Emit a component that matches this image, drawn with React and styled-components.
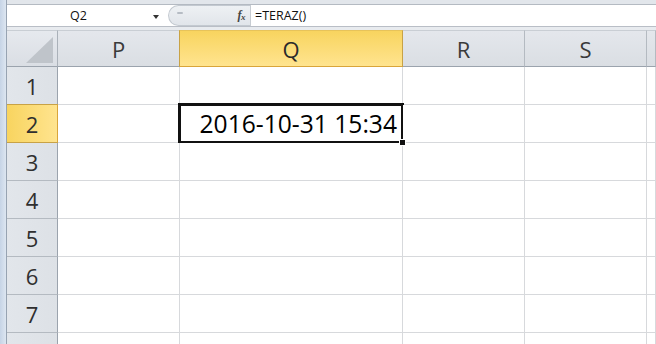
import React from 'react';
import styled, { createGlobalStyle } from 'styled-components';

const Global = createGlobalStyle`
  html, body { margin: 0; padding: 0; background: #fff; overflow: hidden; }
  body { font-family: "Open Sans", "Liberation Sans", sans-serif; }
`;

const Window = styled.div`
  width: 656px;
  height: 344px;
  display: flex;
  overflow: hidden;
  background: #fff;
`;

const SideStrip = styled.div`
  width: 6px;
  flex: none;
  background: linear-gradient(to right, #c6d4e6, #dde6f1);
  border-right: 1px solid #97a3b2;
`;

const Main = styled.div`
  flex: 1;
  min-width: 0;
  display: flex;
  flex-direction: column;
`;

const RibbonEdge = styled.div`
  height: 4px;
  flex: none;
  background: #e2e6eb;
  border-bottom: 1px solid #b4bac2;
`;

const FormulaBar = styled.div`
  height: 21px;
  flex: none;
  display: flex;
  align-items: stretch;
  background: #fff;
  border-bottom: 1px solid #b9bec6;
`;

const NameBox = styled.div`
  width: 156px;
  display: flex;
  align-items: center;
  justify-content: space-between;
  padding: 0 4px 0 63px;
  box-sizing: border-box;
  font-size: 12.5px;
  color: #111;
`;

const Caret = styled.span`
  width: 0;
  height: 0;
  border-left: 3.5px solid transparent;
  border-right: 3.5px solid transparent;
  border-top: 4px solid #333;
  margin-top: 2px;
`;

const FxArea = styled.div`
  width: 82px;
  margin-left: 5px;
  display: flex;
  align-items: center;
  justify-content: space-between;
  padding: 0 5px 0 8px;
  box-sizing: border-box;
  background: linear-gradient(to bottom, #eef1f4, #e1e5ea);
  border: 1px solid #c3c9d0;
  border-right: none;
  border-radius: 11px 0 0 11px;
`;

const Grip = styled.span`
  width: 6px;
  height: 2px;
  border-radius: 1px;
  background: #b6bcc4;
  margin-top: -5px;
`;

const Fx = styled.span`
  font-family: "Liberation Serif", serif;
  font-style: italic;
  font-weight: bold;
  font-size: 12px;
  color: #444;
  letter-spacing: -0.5px;
`;

const FxSub = styled.span`
  font-size: 9px;
  vertical-align: -1px;
`;

const FormulaInput = styled.div`
  flex: 1;
  display: flex;
  align-items: center;
  padding-left: 4px;
  border-left: 1px solid #c7ccd2;
  font-size: 12.5px;
  color: #111;
`;

const Gap = styled.div`
  height: 3px;
  flex: none;
  background: #e8ebef;
`;

const Sheet = styled.div`
  flex: 1;
  display: grid;
  grid-template-columns: 51px 122px 223px 122px 122px 1fr;
  grid-template-rows: 37px repeat(8, 38px);
  overflow: hidden;
`;

const Corner = styled.div`
  box-sizing: border-box;
  background: linear-gradient(to bottom, #e6e9ee, #dadee4);
  border-right: 1px solid #aab1b9;
  border-bottom: 1px solid #9ba3ad;
  border-top: 1px solid #c9ced4;
  display: flex;
  align-items: flex-end;
  justify-content: flex-end;
  padding: 0 4px 3px 0;
`;

const CornerTriangle = styled.div`
  width: 0;
  height: 0;
  border-left: 27px solid transparent;
  border-bottom: 26px solid #bfc4ca;
`;

const ColHeader = styled.div`
  box-sizing: border-box;
  display: flex;
  align-items: center;
  justify-content: center;
  font-size: 22px;
  color: ${p => (p.$active ? '#2b2b2b' : '#3a3a3a')};
  background: ${p =>
    p.$active
      ? 'linear-gradient(to bottom, #f8d45f, #ffe48f)'
      : 'linear-gradient(to bottom, #e4e7ec, #dadee3)'};
  border-top: 1px solid ${p => (p.$active ? '#e7c35a' : '#c9ced4')};
  border-right: 1px solid ${p => (p.$active ? '#c8a246' : '#b4bac1')};
  border-bottom: 1px solid ${p => (p.$active ? '#d9a53a' : '#9ba3ad')};
  ${p => p.$active && 'border-left: 1px solid #c8a246; margin-left: -1px;'}
`;

const RowHeader = styled.div`
  box-sizing: border-box;
  display: flex;
  align-items: center;
  justify-content: center;
  padding-top: 1px;
  font-size: 22px;
  color: #2f2f2f;
  background: ${p =>
    p.$active
      ? 'linear-gradient(to right, #f8d45f, #ffe48f)'
      : 'linear-gradient(to right, #e2e6eb, #dde1e6)'};
  border-right: 1px solid ${p => (p.$active ? '#d9a53a' : '#9ba3ad')};
  border-bottom: 1px solid ${p => (p.$active ? '#c8a246' : '#b4bac1')};
  ${p => p.$active && 'border-top: 1px solid #c8a246; margin-top: -1px;'}
`;

const Cell = styled.div`
  box-sizing: border-box;
  border-right: 1px solid #d7d9dc;
  border-bottom: 1px solid #d7d9dc;
  background: #fff;
  position: relative;
  display: flex;
  align-items: center;
  justify-content: flex-end;
  padding-right: 5px;
  font-size: 24.6px;
  color: #000;
  ${p =>
    p.$selected &&
    `
    &::after {
      content: '';
      position: absolute;
      left: -2px;
      top: -2px;
      right: -2px;
      bottom: -2px;
      border: 3px solid #111;
      pointer-events: none;
    }
  `}
`;

const FillHandle = styled.span`
  position: absolute;
  right: -4px;
  bottom: -4px;
  width: 5px;
  height: 5px;
  background: #111;
  border: 1px solid #fff;
  z-index: 2;
`;

const columns = ['P', 'Q', 'R', 'S', ''];
const rows = [1, 2, 3, 4, 5, 6, 7, null];

export default function App() {
  return (
    <>
      <Global />
      <Window>
        <SideStrip />
        <Main>
          <RibbonEdge />
          <FormulaBar>
            <NameBox>
              <span>Q2</span>
              <Caret />
            </NameBox>
            <FxArea>
              <Grip />
              <Fx>
                f<FxSub>x</FxSub>
              </Fx>
            </FxArea>
            <FormulaInput>=TERAZ()</FormulaInput>
          </FormulaBar>
          <Gap />
          <Sheet>
            <Corner>
              <CornerTriangle />
            </Corner>
            {columns.map((c, i) => (
              <ColHeader key={i} $active={c === 'Q'}>
                {c}
              </ColHeader>
            ))}
            {rows.map((r, ri) => (
              <React.Fragment key={ri}>
                <RowHeader $active={r === 2}>{r}</RowHeader>
                {columns.map((c, i) => {
                  const selected = r === 2 && c === 'Q';
                  return (
                    <Cell key={i} $selected={selected}>
                      {selected && '2016-10-31 15:34'}
                      {selected && <FillHandle />}
                    </Cell>
                  );
                })}
              </React.Fragment>
            ))}
          </Sheet>
        </Main>
      </Window>
    </>
  );
}
